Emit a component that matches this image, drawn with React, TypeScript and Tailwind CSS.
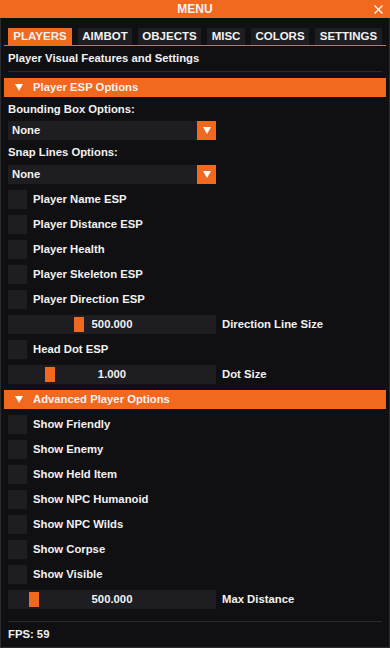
import React from "react";

const FONT = { fontFamily: '"Liberation Sans", Arial, sans-serif' };

function Check({ label }: { label: string }) {
  return (
    <div className="flex items-center h-[19px] mt-[6px]">
      <div className="w-[19px] h-[19px] bg-[#1e1e22]" />
      <span className="ml-[6px] leading-[13px]">{label}</span>
    </div>
  );
}

function Slider({ value, pos, label }: { value: string; pos: number; label: string }) {
  return (
    <div className="flex items-center h-[19px] mt-[6px]">
      <div className="relative w-[208px] h-[19px] bg-[#1e1e22] flex items-center justify-center">
        <div className="absolute top-[2px] w-[10px] h-[15px] bg-[#f0691f]" style={{ left: pos }} />
        <span className="relative leading-[13px]">{value}</span>
      </div>
      <span className="ml-[6px] leading-[13px]">{label}</span>
    </div>
  );
}

function Header({ label }: { label: string }) {
  return (
    <div className="-mx-[4px] mt-[6px] h-[19px] bg-[#f0691f] flex items-center">
      <svg width="8" height="7" viewBox="0 0 8 7" className="ml-[11px]">
        <polygon points="0,0 8,0 4,7" fill="#ffffff" />
      </svg>
      <span className="ml-[10px] leading-[13px]">{label}</span>
    </div>
  );
}

function Combo({ mt }: { mt: string }) {
  return (
    <div className={`flex w-[208px] h-[19px] ${mt}`}>
      <div className="flex-1 bg-[#1e1e22] flex items-center pl-[4px] leading-[13px]">None</div>
      <div className="w-[19px] h-[19px] bg-[#f0691f] flex items-center justify-center">
        <svg width="8" height="7" viewBox="0 0 8 7">
          <polygon points="0,0 8,0 4,7" fill="#ffffff" />
        </svg>
      </div>
    </div>
  );
}

const tabs: [string, number][] = [
  ["PLAYERS", 64],
  ["AIMBOT", 54],
  ["OBJECTS", 63],
  ["MISC", 38],
  ["COLORS", 58],
  ["SETTINGS", 67],
];

export default function App() {
  return (
    <div
      className="relative w-[390px] h-[648px] bg-[#101012] text-[#f2f2f2] text-[11.3px] font-bold overflow-hidden shadow-[inset_0_0_0_1px_#2c2c2f]"
      style={FONT}
    >
      <div className="h-[18px] bg-[#f0691f] flex items-center justify-center relative">
        <span className="text-[12px] leading-[13px]">MENU</span>
        <svg width="9" height="9" viewBox="0 0 9 9" className="absolute right-[7px] top-[5px]">
          <path d="M0.5 0.5 L8.5 8.5 M8.5 0.5 L0.5 8.5" stroke="#ffffff" strokeWidth="1.3" />
        </svg>
      </div>
      <div className="px-[8px] flex flex-col">
        <div className="mt-[10px] -mx-[4px] px-[4px] border-b border-[#f0691f] flex gap-[6px]">
          {tabs.map(([t, w], i) => (
            <div
              key={t}
              className={`h-[17px] flex items-center justify-center leading-[13px] text-[11.5px] ${i === 0 ? "bg-[#f0691f]" : "bg-[#1e1e22]"}`}
              style={{ width: w }}
            >
              {t}
            </div>
          ))}
        </div>
        <div className="mt-[6px] h-[13px] leading-[13px]">Player Visual Features and Settings</div>
        <div className="mt-[6px] h-[1px] bg-[#2a2a2e]" />
        <Header label="Player ESP Options" />
        <div className="mt-[6px] h-[13px] leading-[13px]">Bounding Box Options:</div>
        <Combo mt="mt-[5px]" />
        <div className="mt-[6px] h-[13px] leading-[13px]">Snap Lines Options:</div>
        <Combo mt="mt-[6px]" />
        <Check label="Player Name ESP" />
        <Check label="Player Distance ESP" />
        <Check label="Player Health" />
        <Check label="Player Skeleton ESP" />
        <Check label="Player Direction ESP" />
        <Slider value="500.000" pos={66} label="Direction Line Size" />
        <Check label="Head Dot ESP" />
        <Slider value="1.000" pos={37} label="Dot Size" />
        <Header label="Advanced Player Options" />
        <Check label="Show Friendly" />
        <Check label="Show Enemy" />
        <Check label="Show Held Item" />
        <Check label="Show NPC Humanoid" />
        <Check label="Show NPC Wilds" />
        <Check label="Show Corpse" />
        <Check label="Show Visible" />
        <Slider value="500.000" pos={21} label="Max Distance" />
        <div className="mt-[12px] h-[1px] bg-[#2a2a2e]" />
        <div className="mt-[6px] h-[13px] leading-[13px]">FPS: 59</div>
      </div>
    </div>
  );
}
